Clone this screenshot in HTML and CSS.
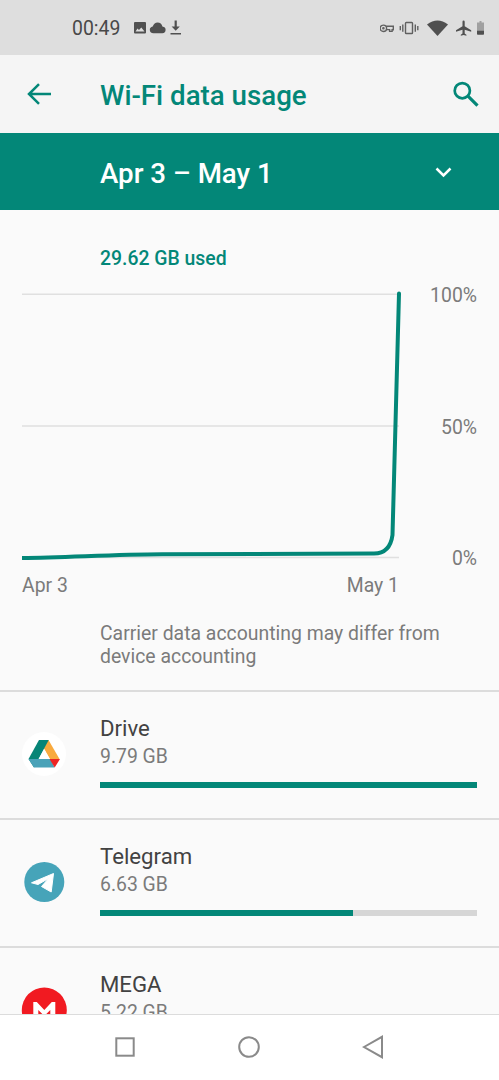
FILE: index.html
```html
<!DOCTYPE html>
<html lang="en">
<head>
<meta charset="utf-8">
<title>Wi-Fi data usage</title>
<link rel="stylesheet" href="styles.css">
</head>
<body>
<div class="phone">
  <div class="status">
    <span class="clock">00:49</span>
    <svg class="status-left" width="50" height="16" viewBox="0 0 50 16" fill="#505050">
      <path fill-rule="evenodd" d="M2 2h10q1 0 1 1v9.500q0 1-1 1H2q-1 0-1-1V3q0-1 1-1zM2.500 11.500h9L8.300 7.500 6 10 4.500 8.400z"/>
      <path d="M20.500 13.200q-3.700-.3-3.700-3.500 0-2.700 2.900-3.300Q21.200 2.500 24.600 2.500q3.800 0 4.800 3.900 3.200.5 3.200 3.300 0 3.200-3.300 3.500z"/>
      <path d="M41.600 .500h2.200V6.500h3L42.700 10.800 38.600 6.500h3zM37.500 13h10.500v1.400H37.500z"/>
    </svg>
    <svg class="status-right" width="112" height="20" viewBox="0 0 112 20" fill="#505050">
      <g fill="none" stroke="#606060" stroke-width="1.400">
        <circle cx="3.400" cy="10.300" r="3.200"/><circle cx="3.400" cy="10.300" r=".6"/>
        <path d="M6.200 8.300h7.100v3.500h-1.200v1.600H9.600v-1.800H6.200"/>
        <rect x="25.500" y="4.500" width="7" height="11" rx=".8"/>
        <path d="M22.800 6.500v7.200M20.300 8v4.300M35.300 6.500v7.200M37.800 8v4.300"/>
      </g>
      <path d="M47 6.500Q57.500-1.500 68 6.500L57.500 18z"/>
      <path d="M83.600 2.500q1.100 0 1.100 1.300v4.500l6.500 3.900v1.500l-6.500-1.900v3.700l1.700 1.200v1.100l-2.800-.8-2.800.8v-1.100l1.700-1.200v-3.700l-6.500 1.900v-1.500l6.500-3.900v-4.500q0-1.300 1.100-1.300z"/>
      <path fill="#a0a0a0" d="M99.500 3h2V4.500h2.500V13h-7V4.500h2.500z"/>
      <path d="M97 12.800h7V16q0 .8-.8.800h-5.400q-.8 0-.8-.8z"/>
    </svg>
  </div>
  <header class="header">
    <svg class="back" width="26" height="24" viewBox="0 0 26 24" fill="none" stroke="#038778" stroke-width="2.500"><path d="M25 12H3M13 2.100L3 12l10 9.900"/></svg>
    <h1 class="title">Wi-Fi data usage</h1>
    <svg class="search" width="28" height="28" viewBox="0 0 28 28" fill="none" stroke="#038778"><circle cx="10.300" cy="10.700" r="7.600" stroke-width="2.700"/><path d="M16 16.200l9.500 9.500" stroke-width="3.200"/></svg>
  </header>
  <div class="cycle">
    <span class="cycle-label">Apr 3 – May 1</span>
    <svg class="chevron" width="18" height="12" viewBox="0 0 18 12" fill="none" stroke="#fff" stroke-width="2.500"><path d="M1.500 2.500l7 7 7-7"/></svg>
  </div>
  <main class="content">
    <section class="usage">
      <p class="total">29.62 GB used</p>
      <div class="chart">
        <svg class="plot" width="380" height="270" viewBox="0 0 380 270">
          <path d="M0 4.200h377M0 136h377M0 267.500h377" stroke="#e0e0e0" stroke-width="1.500"/>
          <path d="M0 268C45 267.500 90 264.500 140 264.200L352 263.500Q368 263.500 370.500 245L377 3.500" fill="none" stroke="#038778" stroke-width="4" stroke-linejoin="round"/>
          <circle cx="377" cy="3.500" r="2" fill="#038778"/>
        </svg>
        <div class="scale"><span>100%</span><span>50%</span><span>0%</span></div>
      </div>
      <div class="dates"><span>Apr 3</span><span>May 1</span></div>
      <p class="note">Carrier data accounting may differ from device accounting</p>
    </section>
    <section class="app">
      <svg class="app-icon" width="46" height="46" viewBox="0 0 46 46">
        <circle cx="23" cy="23" r="22" fill="#fff"/>
        <path d="M18 9h9.500L38.500 28H29z" fill="#f9aa3e"/>
        <path d="M18 9h9.700L13 36.500 7.500 28z" fill="#078577"/>
        <path d="M10 28H30l3.500 8.500H13L7.500 28z" fill="#4aa2b8"/>
        <path d="M28.500 28h10.500l-5.300 8.500z" fill="#ed2525"/>
        <path d="M23.200 18l5.500 10h-11z" fill="#fff"/>
      </svg>
      <div class="app-info"><div class="app-name">Drive</div><div class="app-size">9.79 GB</div><div class="bar"><div class="bar-fill" style="width:100%"></div></div></div>
    </section>
    <section class="app">
      <svg class="app-icon" width="46" height="46" viewBox="0 0 46 46">
        <circle cx="23.300" cy="23" r="20" fill="#46a4b9"/>
        <path d="M10.500 23.800L32.500 14.500 30.200 33 20.500 27.500 27.500 19.500 17 25.500z" fill="#fff" stroke="#fff" stroke-linejoin="round"/>
      </svg>
      <div class="app-info"><div class="app-name">Telegram</div><div class="app-size">6.63 GB</div><div class="bar"><div class="bar-fill" style="width:67.2%"></div></div></div>
    </section>
    <section class="app">
      <svg class="app-icon" width="46" height="46" viewBox="0 0 46 46">
        <circle cx="23.300" cy="23" r="22.500" fill="#f11a21"/>
        <path d="M12.300 34V15h3.500l7.500 8 7.500-8h3.500v19h-5V23l-6 6-6-6v11z" fill="#fff"/>
      </svg>
      <div class="app-info"><div class="app-name">MEGA</div><div class="app-size">5.22 GB</div><div class="bar"><div class="bar-fill" style="width:53%"></div></div></div>
    </section>
  </main>
  <nav class="nav">
    <svg width="24" height="24" viewBox="0 0 24 24"><rect x="3.300" y="3.300" width="17.400" height="17.400"/></svg>
    <svg width="24" height="24" viewBox="0 0 24 24"><circle cx="12" cy="12" r="9.800"/></svg>
    <svg width="24" height="24" viewBox="0 0 24 24"><path d="M2 12L20 1.800v20.400z"/></svg>
  </nav>
</div>
</body>
</html>
```
FILE: styles.css
```css
* { box-sizing: border-box; }
body { margin: 0; font-family: Roboto, "Liberation Sans", sans-serif; background: #fafafa; }
h1, p { margin: 0; }
svg { display: block; flex: none; }
.phone { width: 499px; height: 1080px; display: flex; flex-direction: column; overflow: hidden; }
.status { flex: none; height: 55px; background: #dedede; padding: 2px 7px 0 72px; display: flex; align-items: center; }
.clock { font-size: 19.4px; line-height: 24px; color: #484848; width: 61px; }
.status-left { margin-top: -2px; }
.status-right { margin: -1px 0 0 auto; }
.header { flex: none; height: 78px; background: #f5f5f5; padding: 0 19px 0 26px; display: flex; align-items: center; }
.title { font-size: 27.7px; line-height: 32px; font-weight: 500; color: #038778; margin: 3px auto 0 48px; }
.cycle { flex: none; height: 77px; background: #038778; color: #fff; padding: 0 46px 0 100px; display: flex; align-items: center; justify-content: space-between; }
.cycle-label { font-size: 27.7px; line-height: 32px; font-weight: 500; margin-top: 5px; }
.content { flex: 1; min-height: 0; overflow: hidden; }
.usage { height: 480px; padding: 37px 22px 0; }
.total { font-size: 19.4px; line-height: 24px; font-weight: 500; color: #038778; padding-left: 78px; }
.chart { display: flex; justify-content: space-between; margin-top: 19px; height: 270px; }
.scale { display: flex; flex-direction: column; justify-content: space-between; align-items: flex-end; height: 287px; margin-top: -6px; font-size: 19.4px; line-height: 24px; color: #7b7b7b; }
.dates { width: 377px; margin-top: 14px; display: flex; justify-content: space-between; font-size: 19.4px; line-height: 24px; color: #7b7b7b; }
.note { font-size: 19.4px; line-height: 23px; color: #7b7b7b; margin-top: 24px; padding-left: 78px; width: 440px; }
.app { height: 128px; border-top: 2px solid #dcdcdc; padding: 21px 22px 0 21px; display: flex; }
.app-icon { margin: 18px 33px 0 0; }
.app-info { flex: 1; }
.app-name { font-size: 22.2px; line-height: 30px; color: #424242; }
.app-size { font-size: 19.4px; line-height: 24px; color: #7b7b7b; margin-top: 2px; }
.bar { height: 6px; background: #d6d6d6; margin-top: 13px; }
.bar-fill { height: 100%; background: #038778; }
.nav { flex: none; height: 66px; background: #fff; border-top: 1px solid #dcdcdc; padding: 0 1px 2px 0; display: flex; justify-content: center; align-items: center; gap: 100.5px; fill: none; stroke: #8a8a8a; stroke-width: 2; }
```
